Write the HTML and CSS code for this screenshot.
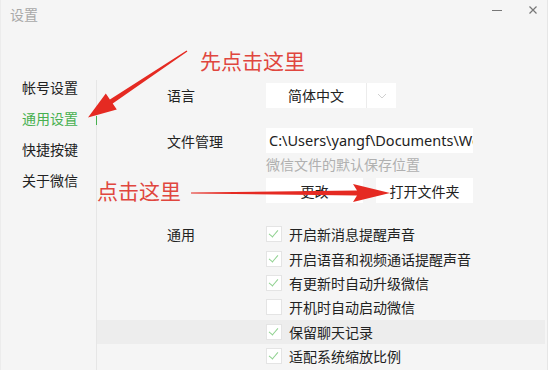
FILE: index.html
```html
<!DOCTYPE html>
<html lang="zh-CN">
<head>
<meta charset="UTF-8">
<meta name="viewport" content="width=device-width, initial-scale=1.0">
<title>设置</title>
<link rel="stylesheet" href="styles.css">
</head>
<body>
<div class="window">
  <div class="titlebar">
    <span class="title">设置</span>
    <div class="controls">
      <svg class="btn-min" width="12" height="12" viewBox="0 0 12 12"><line x1="1" y1="6.5" x2="11" y2="6.5" stroke="#777" stroke-width="1"/></svg>
      <svg class="btn-close" width="12" height="12" viewBox="0 0 12 12"><path d="M2.5 2.5 L9.5 9.5 M9.5 2.5 L2.5 9.5" stroke="#777" stroke-width="1.2"/></svg>
    </div>
  </div>

  <div class="main">
    <ul class="nav">
      <li>帐号设置</li>
      <li class="active">通用设置</li>
      <li>快捷按键</li>
      <li>关于微信</li>
    </ul>

    <div class="content">
      <div class="row">
        <div class="label">语言</div>
        <div class="select">
          <span class="select-text">简体中文</span>
          <span class="select-caret"><svg width="10" height="6" viewBox="0 0 10 6"><path d="M1 1 L5 5 L9 1" fill="none" stroke="#d0d0d0" stroke-width="1"/></svg></span>
        </div>
      </div>

      <div class="row row-file">
        <div class="label">文件管理</div>
        <div class="field">
          <div class="path">C:\Users\yangf\Documents\WeChat Files</div>
          <div class="hint">微信文件的默认保存位置</div>
          <div class="buttons">
            <button>更改</button>
            <button>打开文件夹</button>
          </div>
        </div>
      </div>

      <div class="checks">
        <div class="check-row"><div class="label">通用</div><div class="check on"><span class="box"></span>开启新消息提醒声音</div></div>
        <div class="check-row"><div class="label"></div><div class="check on"><span class="box"></span>开启语音和视频通话提醒声音</div></div>
        <div class="check-row"><div class="label"></div><div class="check on"><span class="box"></span>有更新时自动升级微信</div></div>
        <div class="check-row"><div class="label"></div><div class="check"><span class="box"></span>开机时自动启动微信</div></div>
        <div class="check-row hover"><div class="label"></div><div class="check on"><span class="box"></span>保留聊天记录</div></div>
        <div class="check-row"><div class="label"></div><div class="check on"><span class="box"></span>适配系统缩放比例</div></div>
      </div>
    </div>
  </div>

  <!-- annotations drawn over the screenshot -->
  <svg class="arrows" width="548" height="370" viewBox="0 0 548 370">
    <polygon fill="#e52a22" points="185.6,50.4 108.9,99.4 104.8,93.6 87,117.5 115.8,109.4 111.7,103.6 186.4,51.6"/>
    <polygon fill="#e52a22" points="190,192.6 356,190.6 352,184 389,193 352,202 356,195.4 190,193.6"/>
  </svg>
  <span class="note note-first">先点击这里</span>
  <span class="note note-second">点击这里</span>
</div>
</body>
</html>
```

FILE: styles.css
```css
body { margin: 0; background: #fff; font-family: "Noto Sans CJK SC", "Noto Sans", sans-serif; font-size: 14px; color: #222; }
.window { position: relative; width: 546px; height: 370px; background: #f5f5f5; border-left: 1px solid #ececec; border-right: 1px solid #e6e6e6; overflow: hidden; }

.titlebar { height: 28px; display: flex; align-items: center; justify-content: space-between; }
.title { padding-left: 9px; color: #a8a8a8; line-height: 28px; }
.controls { display: flex; gap: 24px; padding-right: 8px; margin-top: -8px; }

.main { display: flex; margin-top: 44px; height: 298px; }
.nav { list-style: none; margin: 0; padding: 0 0 0 21px; width: 74px; }
.nav li { line-height: 31px; height: 31px; position: relative; white-space: nowrap; }
.nav li.active { color: #46b04f; }
.nav li.active::after { content: ""; position: absolute; right: -1px; top: 13px; width: 1px; height: 9px; background: #46b04f; }

.content { flex: 1; margin-top: 8px; padding-top: 3px; border-left: 1px solid #e6e6e6; padding-right: 2px; }
.row { display: grid; grid-template-columns: 169px 1fr; }
.label { padding-left: 70px; line-height: 25px; white-space: nowrap; }
.row-file { margin-top: 20px; }
.row-file .label { line-height: 27px; }

.select { display: flex; width: 130px; height: 25px; background: #fff; }
.select-text { width: 100px; text-align: center; line-height: 25px; border-right: 1px solid #ececec; }
.select-caret { flex: 1; display: flex; align-items: center; justify-content: center; }

.path { width: 204px; height: 25px; padding-left: 3px; background: #fff; line-height: 25px; white-space: nowrap; overflow: hidden; font-family: "Noto Sans", "Noto Sans CJK SC", sans-serif; font-size: 14.5px; color: #222; }
.hint { margin-top: 2px; line-height: 18px; color: #b0b0b0; }
.buttons { display: flex; gap: 13px; margin-top: 5px; }
.buttons button { width: 97px; height: 25px; border: 0; background: #fff; font: inherit; color: #222; padding: 0; }

.checks { margin-top: 19px; }
.check-row { display: grid; grid-template-columns: 169px 1fr; height: 24.4px; align-items: center; }
.check-row.hover { background: #ededed; }
.check-row .label { line-height: 24px; }
.check { display: flex; align-items: center; line-height: 24px; white-space: nowrap; }
.box { width: 14px; height: 14px; border: 1px solid #e4e4e4; background: #fff; margin-right: 7px; position: relative; }
.check.on .box::after { content: ""; position: absolute; left: 4px; top: 1px; width: 4px; height: 8px; border: solid #8fd18f; border-width: 0 1px 1px 0; transform: rotate(40deg); }

.arrows { position: absolute; left: 0; top: 0; pointer-events: none; }
.note { position: absolute; color: #e0463e; font-size: 21px; line-height: 26px; white-space: nowrap; }
.note-first { left: 199px; top: 47px; }
.note-second { left: 96px; top: 177px; }
```
